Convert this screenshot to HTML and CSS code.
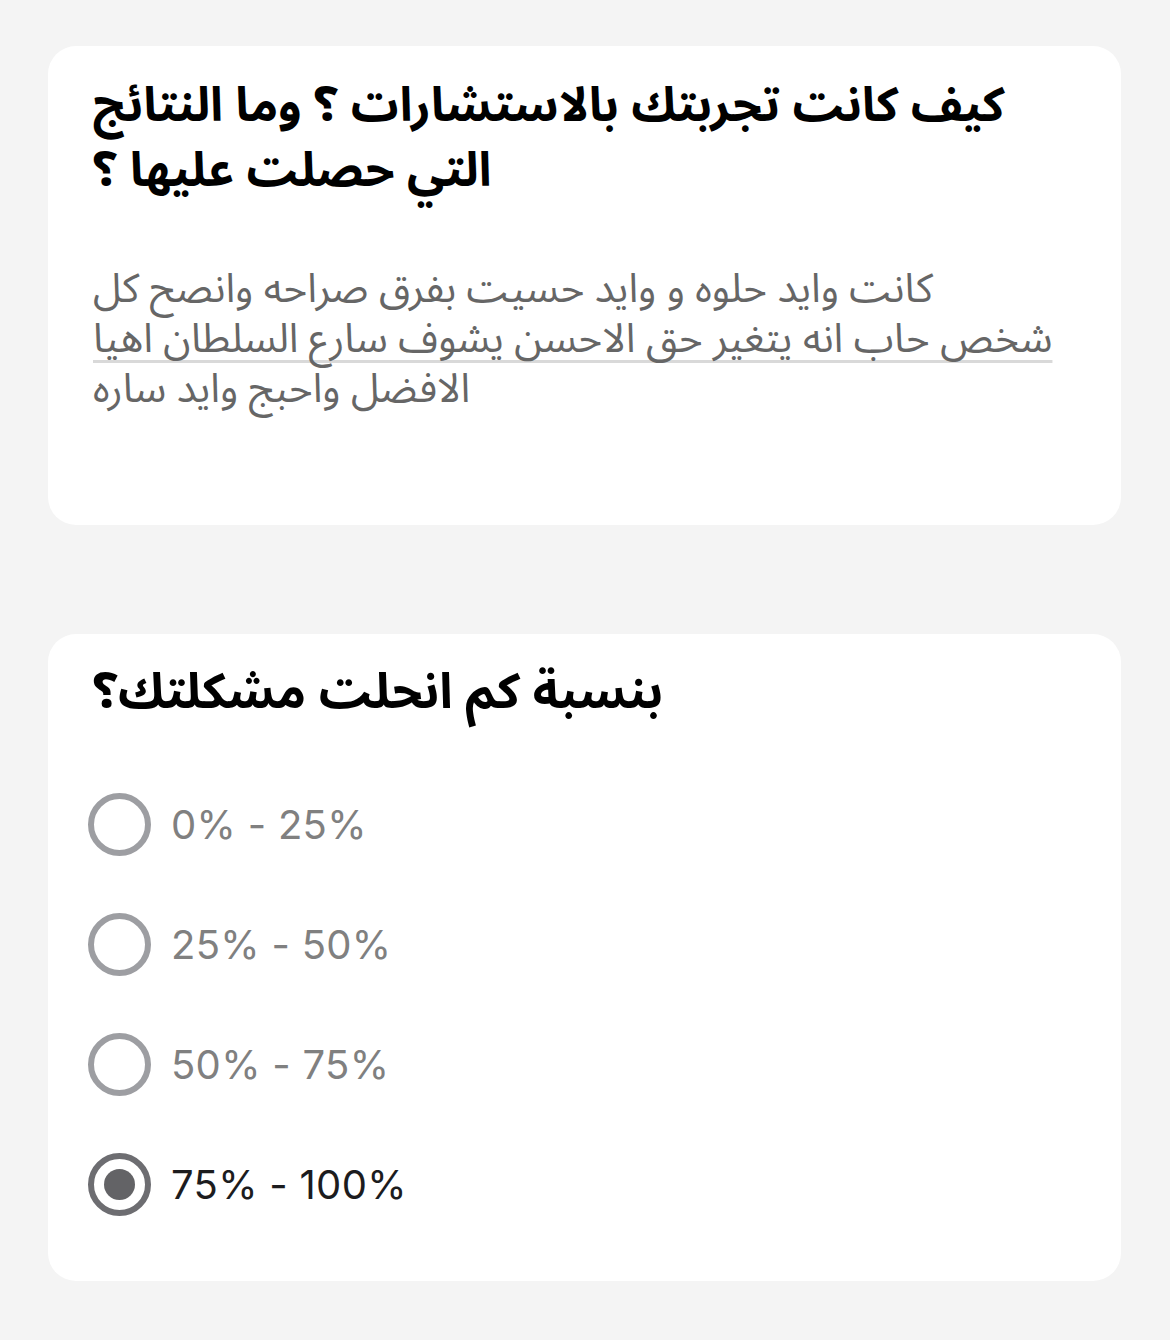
FILE: index.html
```html
<!DOCTYPE html>
<html lang="ar">
<head>
<meta charset="utf-8">
<link rel="stylesheet" href="styles.css">
</head>
<body>
<main class="page">
  <section class="card card-text">
    <h2 class="question" dir="rtl">كيف كانت تجربتك بالاستشارات ؟ وما النتائج<br>التي حصلت عليها ؟</h2>
    <div class="answer" dir="rtl">
      <div class="line">كانت وايد حلوه و وايد حسيت بفرق صراحه وانصح كل</div>
      <div class="line"><span class="marked">شخص حاب انه يتغير حق الاحسن يشوف سارع السلطان اهيا</span></div>
      <div class="line">الافضل واحبج وايد ساره</div>
    </div>
  </section>
  <section class="card card-choice">
    <h2 class="question q2" dir="rtl">بنسبة كم انحلت مشكلتك؟</h2>
    <ul class="options">
      <li class="option"><span class="radio"></span><span class="label">0% - 25%</span></li>
      <li class="option"><span class="radio"></span><span class="label">25% - 50%</span></li>
      <li class="option"><span class="radio"></span><span class="label">50% - 75%</span></li>
      <li class="option selected"><span class="radio"></span><span class="label">75% - 100%</span></li>
    </ul>
  </section>
</main>
</body>
</html>
```
FILE: styles.css
```css
* { box-sizing: border-box; }
html, body { margin: 0; padding: 0; }
body {
  background: #f4f4f4;
  font-family: "Noto Sans Arabic", "DejaVu Sans", "Noto Sans", sans-serif;
  width: 1170px;
  height: 1340px;
  overflow: hidden;
}
.page {
  display: flex;
  flex-direction: column;
  gap: 109px;
  padding: 46px 49px 0 48px;
}
.card {
  background: #ffffff;
  border-radius: 28px;
  padding: 0 45px;
}
.card-text {
  height: 479px;
  padding-top: 28px;
}
.card-choice {
  height: 647px;
  padding-top: 26px;
}
.question {
  margin: 0;
  font-size: 47.5px;
  font-weight: 700;
  line-height: 65px;
  color: #000;
  text-align: left;
}
.q2 {
  font-size: 49px;
  line-height: 66px;
}
.answer {
  margin-top: 60px;
  font-size: 40.5px;
  line-height: 50px;
  color: #666666;
  text-align: left;
}
.line { white-space: nowrap; }
.marked {
  text-decoration: underline;
  text-decoration-color: #d9d9d9;
  text-decoration-thickness: 3px;
  text-underline-offset: 8px;
  text-decoration-skip-ink: none;
}
.options {
  list-style: none;
  margin: 67px 0 0 -5px;
  padding: 0;
  display: flex;
  flex-direction: column;
  gap: 57px;
  font-family: Inter, Roboto, "Liberation Sans", sans-serif;
}
.option {
  display: flex;
  align-items: center;
  gap: 20px;
  height: 63px;
}
.radio {
  width: 63px;
  height: 63px;
  border-radius: 50%;
  border: 6px solid #9d9ea2;
  display: flex;
  align-items: center;
  justify-content: center;
  flex: none;
}
.label {
  font-size: 40px;
  color: #808080;
  letter-spacing: 0.3px;
}
.selected .radio { border-color: #6d6d71; }
.selected .radio::after {
  content: "";
  width: 31px;
  height: 31px;
  border-radius: 50%;
  background: #636366;
}
.selected .label { color: #1c1c1e; }
```
